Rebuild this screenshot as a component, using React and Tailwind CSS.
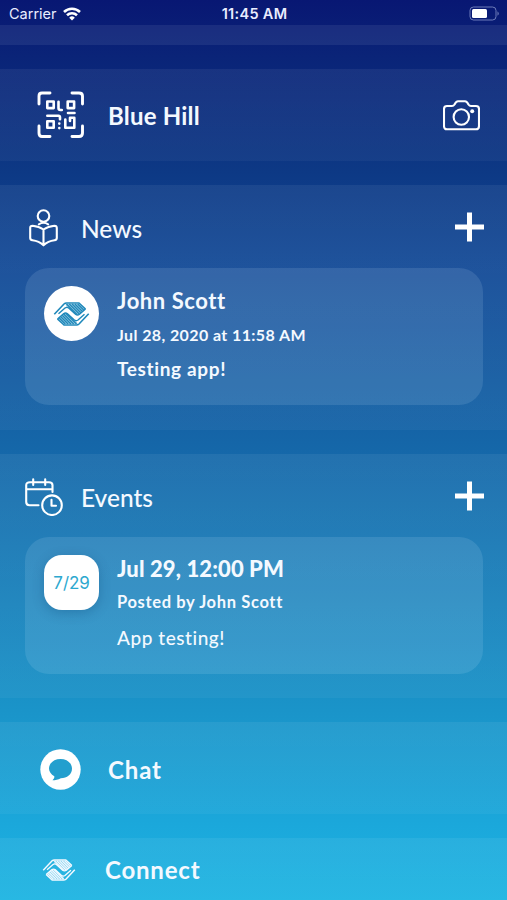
import React from "react";

function HandShape() {
  return (
    <g>
      <path d="M12 2 H25.500 L32 7 L25.500 13 L22.500 13 L13 4.500 Z" fill="currentColor" fillOpacity=".45" stroke="none" />
      <path d="M0.800 12.300 L10.500 2 Q11.500 1 13 1 H25.500 L32 7" strokeWidth="1.600" />
      <path d="M5 11.800 L11.500 6 Q13.500 4.600 15.500 6.200 L22 12.300 Q24 13.800 26 12.300 L32 7" />
      <path d="M13 2 L23.500 12.500 M15.800 2 L25.800 12 M18.600 2 L27.300 10.700 M21.400 2 L28.700 9.300 M24.200 2 L30.200 8" strokeWidth="1.300" />
    </g>
  );
}

function Hands({ className }) {
  return (
    <svg viewBox="0 0 36 24" className={className} fill="none" stroke="currentColor" strokeWidth="1.400" strokeLinejoin="round">
      <HandShape />
      <g transform="rotate(180 18 12)">
        <HandShape />
      </g>
    </svg>
  );
}

function StatusBar() {
  return (
    <header className="grid h-[25px] grid-cols-3 items-center pr-[7px] pl-[9px] pt-[3px] font-['Inter'] text-[#e9edff]">
      <div className="flex items-center gap-[6px]">
        <span className="text-[14.500px] leading-none">Carrier</span>
        <svg className="mt-[-1px] h-[14px] w-[18px]" viewBox="0 0 18 14" fill="none" stroke="white" strokeWidth="2.600">
          <path d="M1 5 A11.500 11.500 0 0 1 17 5" />
          <path d="M4 8.300 A7.200 7.200 0 0 1 14 8.300" />
          <path d="M9 13.600 L6.200 10.700 A4 4 0 0 1 11.800 10.700 Z" fill="white" stroke="none" />
        </svg>
      </div>
      <span className="text-center text-[14.500px] leading-none font-semibold tracking-[0.300px] whitespace-nowrap">11:45 AM</span>
      <svg className="mt-[-2px] h-[15px] w-[31px] justify-self-end" viewBox="0 0 31 15">
        <rect x="1" y="1" width="26" height="13" rx="3.500" fill="none" stroke="#8f9bd0" strokeOpacity=".75" />
        <rect x="3" y="3" width="15" height="9" rx="1.500" fill="white" />
        <path d="M28.500 5.200 Q31 7.500 28.500 9.800 Z" fill="#8f9bd0" fillOpacity=".8" />
      </svg>
    </header>
  );
}

function QrIcon() {
  return (
    <svg className="h-[48px] w-[48px]" viewBox="0 0 48 48" fill="none" stroke="white" strokeWidth="2.900" strokeLinecap="round" strokeLinejoin="round">
      <path d="M2 13 V5 Q2 2 5 2 H13 M35 2 H42 Q45.500 2 45.500 5 V13 M45.500 35 V42 Q45.500 45.500 42 45.500 H35 M13 45.500 H5 Q2 45.500 2 42 V35" />
      <g strokeWidth="2.600">
        <rect x="10.300" y="10.500" width="6.400" height="6.600" />
        <rect x="30.700" y="10.500" width="6.400" height="6.600" />
        <rect x="10.300" y="30.200" width="6.400" height="6.600" />
        <path d="M21.500 10.800 V17 Q21.500 19 23.500 19 H24.800 M10.300 24.800 H21.500 Q23 24.800 23 26.500 V28.300 M31 22 H37.500 M28.300 28.500 V36.800 H37.300 V26.800 H33 V30 M22.300 32.500 V32.600 M22.300 37 V37.100" />
      </g>
    </svg>
  );
}

function CameraIcon() {
  return (
    <svg className="h-[31px] w-[37px]" viewBox="0 0 37 31" fill="none" stroke="white" strokeWidth="2.100" strokeLinejoin="round">
      <path d="M4 6 H9 Q10.500 6 11.500 4.500 Q13 1.300 15 1.300 H22 Q24 1.300 25.500 4.500 Q26.500 6 28 6 H33 Q36 6 36 9 V26 Q36 29.300 33 29.300 H4 Q1 29.300 1 26 V9 Q1 6 4 6 Z" />
      <circle cx="18.300" cy="17" r="7.700" />
      <circle cx="29.200" cy="11.200" r="2" fill="white" stroke="none" />
    </svg>
  );
}

function ReaderIcon() {
  return (
    <svg className="h-[38px] w-[29px]" viewBox="0 0 29 38" fill="none" stroke="white" strokeWidth="2.100" strokeLinecap="round" strokeLinejoin="round">
      <circle cx="14.500" cy="7" r="5.800" />
      <path d="M9.800 15.300 Q14.500 12.300 19.200 15.300" />
      <path d="M14.500 20.500 V36 M14.500 20.500 Q10 17.300 3.500 16.700 Q1.200 16.700 1.200 19 V29 Q1.200 31 3.500 31.300 Q10 32.200 14.500 36.300 Q19 32.200 25.500 31.300 Q27.800 31 27.800 29 V19 Q27.800 16.700 25.500 16.700 Q19 17.300 14.500 20.500 Z" />
    </svg>
  );
}

function CalendarIcon() {
  return (
    <svg className="h-[38px] w-[38px]" viewBox="0 0 38 38" fill="none" stroke="white" strokeWidth="2.100" strokeLinecap="round" strokeLinejoin="round">
      <path d="M5 4.200 H24 Q27.500 4.200 27.500 7.200 V14 M5 4.200 Q1.200 4.200 1.200 7.200 V24 Q1.200 27.200 4.500 27.200 H13.500 M1.200 11.300 H27.500 M8.200 1.300 V7 M20.200 1.300 V7" />
      <circle cx="27" cy="27.200" r="9.800" />
      <path d="M26.500 21.700 V27.700 H31" />
    </svg>
  );
}

function Plus() {
  return (
    <svg className="mt-[-2px] mr-[1px] h-[30px] w-[29px]" viewBox="0 0 29 30" fill="white">
      <path d="M12 0.500 h5 v12 h12 v5 h-12 v12 h-5 v-12 h-12 v-5 h12 z" />
    </svg>
  );
}

const PANEL = "bg-gradient-to-b from-white/6 to-white/4";

function Row({ height, label, children, right }) {
  return (
    <section className={`flex shrink-0 items-center ${height} ${PANEL}`}>
      <div className="flex w-[108px] shrink-0 items-center pl-[37px]">{children}</div>
      {label}
      <div className="ml-auto pr-[27px]">{right}</div>
    </section>
  );
}

export default function App() {
  return (
    <main className="flex h-[900px] w-[507px] flex-col gap-[24px] overflow-hidden bg-[linear-gradient(180deg,#081773_0px,#0a2478_57px,#0d3985_173px,#124a97_270px,#1566a8_442px,#1a94c9_710px,#1ba8db_826px,#1fb5e2_900px)] font-['Lato'] text-[#f4f9ff] [font-variant-ligatures:none]">
      <div className="shrink-0">
        <StatusBar />
        <div className="h-[20px] bg-white/7" />
      </div>

      <Row
        height="h-[92px]"
        label={<h2 className="pt-[2px] text-[24px] leading-none font-bold tracking-[0.200px]">Blue Hill</h2>}
        right={<CameraIcon />}
      >
        <QrIcon />
      </Row>

      <section className={`h-[245px] shrink-0 ${PANEL}`}>
        <div className="flex h-[83px] items-center pt-[3px] pr-[22px]">
          <div className="w-[81px] pl-[29px]"><ReaderIcon /></div>
          <h2 className="pt-[2px] text-[24.500px] leading-none font-medium">News</h2>
          <div className="ml-auto"><Plus /></div>
        </div>
        <article className="mr-[24px] ml-[25px] flex h-[137px] rounded-[24px] bg-[#d5eeff]/12 pl-[19px]">
          <div className="mt-[18px] flex size-[55px] shrink-0 items-center justify-center rounded-full bg-white text-[#2089bb]">
            <Hands className="h-[24px] w-[37px]" />
          </div>
          <div className="ml-[18px] flex flex-col whitespace-nowrap">
            <h3 className="mt-[22px] text-[22px] leading-[22px] font-bold tracking-[0.550px]">John Scott</h3>
            <p className="mt-[15px] text-[16px] leading-[16px] font-bold tracking-[0.400px]">Jul 28, 2020 at 11:58 AM</p>
            <p className="mt-[16px] text-[19px] leading-[19px] font-bold tracking-[0.650px]">Testing app!</p>
          </div>
        </article>
      </section>

      <section className={`h-[244px] shrink-0 ${PANEL}`}>
        <div className="flex h-[83px] items-center pt-[2px] pr-[22px]">
          <div className="w-[81px] pl-[25px]"><CalendarIcon /></div>
          <h2 className="pt-[4px] text-[24.500px] leading-none font-medium">Events</h2>
          <div className="ml-auto"><Plus /></div>
        </div>
        <article className="mr-[24px] ml-[25px] flex h-[137px] rounded-[24px] bg-[#d5eeff]/12 pl-[19px]">
          <div className="mt-[18px] flex size-[55px] shrink-0 items-center justify-center rounded-[18px] bg-white pt-[2px] font-['Inter'] text-[17px] tracking-[-0.100px] text-[#2da8cf] shadow-[0_3px_12px_rgba(0,50,100,0.25)]">
            7/29
          </div>
          <div className="ml-[18px] flex flex-col whitespace-nowrap">
            <h3 className="mt-[21px] text-[22px] leading-[22px] font-black tracking-[0.120px]">Jul 29, 12:00 PM</h3>
            <p className="mt-[14px] text-[16.500px] leading-[16px] font-bold tracking-[0.640px]">Posted by John Scott</p>
            <p className="mt-[18px] text-[19px] leading-[19px] font-medium tracking-[0.550px]">App testing!</p>
          </div>
        </article>
      </section>

      <Row
        height="h-[92px]"
        label={<h2 className="pt-[3px] text-[24px] leading-none font-bold tracking-[0.900px]">Chat</h2>}
      >
        <svg className="mt-[3px] ml-[3px] size-[41px]" viewBox="0 0 41 41">
          <circle cx="20.500" cy="20.500" r="20.200" fill="white" />
          <path d="M20.500 10 C26.800 10 32 14 32 19.500 C32 25.500 27 29.200 20.800 29.200 C18 30.600 15.500 31.200 12.500 31.200 C14 30 14.500 28.800 14.300 27.200 C11 25.500 9 22.500 9 19.500 C9 14 14.200 10 20.500 10 Z" fill="#239fce" />
        </svg>
      </Row>

      <Row
        height="h-[62px]"
        label={<h2 className="ml-[-3px] pt-[2px] text-[24px] leading-none font-bold tracking-[0.800px]">Connect</h2>}
      >
        <Hands className="mt-[1px] ml-[5px] h-[22px] w-[34px]" />
      </Row>
    </main>
  );
}
